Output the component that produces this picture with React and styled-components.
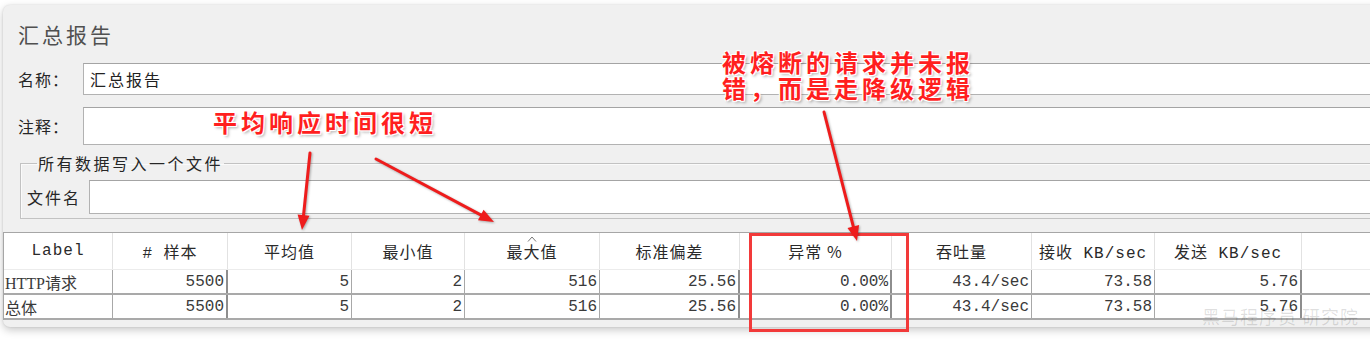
import React from "react";
import styled, { createGlobalStyle } from "styled-components";

const GlobalStyle = createGlobalStyle`
  html, body { margin: 0; padding: 0; background: #ffffff; }
  body { overflow: hidden; font-family: "Noto Sans CJK SC", "Liberation Sans", sans-serif; }
`;

const CJK = `"Noto Sans CJK SC", "Liberation Sans", sans-serif`;
const MONO = `"Liberation Mono", "Noto Sans CJK SC", monospace`;
const COLS = "109px 115px 124px 113px 135px 140px 152px 140px 123px 147px 1fr";

const Page = styled.div`
  position: relative;
  width: 1370px;
  height: 348px;
  overflow: hidden;
  padding: 5px 0 0 3px;
  box-sizing: border-box;
`;

const Panel = styled.div`
  background: #f0f0f0;
  border-radius: 7px 0 0 7px;
  box-shadow: 0 3px 8px rgba(0, 0, 0, 0.22), 0 0 2px rgba(0, 0, 0, 0.12);
  margin-right: -40px;
  padding: 19px 0 7px 0;
`;

const Title = styled.div`
  margin-left: 15px;
  font-family: ${CJK};
  font-size: 21px;
  line-height: 21px;
  letter-spacing: 3px;
  color: #505050;
`;

const FieldRow = styled.div`
  display: flex;
  align-items: center;
  padding-left: ${(p) => p.$pl ?? 15}px;
  margin-top: ${(p) => p.$mt ?? 0}px;
`;

const FieldLabel = styled.div`
  width: ${(p) => p.$w ?? 65}px;
  flex: none;
  font-family: ${CJK};
  font-size: 16px;
  letter-spacing: ${(p) => p.$ls ?? 1}px;
  color: #262626;
`;

const TextBox = styled.div`
  flex: 1;
  height: ${(p) => p.$h}px;
  box-sizing: border-box;
  background: #ffffff;
  border: 1px solid #b2b2b2;
  border-top-color: #a4a4a4;
  display: flex;
  align-items: center;
  padding-left: 6px;
  font-family: ${CJK};
  font-size: 16px;
  letter-spacing: 2px;
  color: #222;
`;

const Group = styled.fieldset`
  margin: 9px 0 0 17px;
  padding: 0 0 4px 6px;
  border: 1px solid #c2c2c2;
  box-shadow: inset 1px 1px 0 #fafafa;
  min-width: 0;
`;

const Legend = styled.legend`
  margin-left: 10px;
  padding: 0 1px;
  font-family: ${CJK};
  font-size: 16px;
  line-height: 18px;
  letter-spacing: 2.5px;
  color: #262626;
`;

const Table = styled.div`
  margin-top: 13px;
  border-top: 1px solid #a6a6a6;
  border-left: 1px solid #a6a6a6;
  background: #ffffff;
`;

const HeaderRow = styled.div`
  display: grid;
  grid-template-columns: ${COLS};
  height: 37px;
  border-bottom: 1px solid #ececec;
  box-sizing: border-box;
`;

const HeaderCell = styled.div`
  position: relative;
  display: flex;
  align-items: center;
  justify-content: center;
  border-right: 1px solid #e2e2e2;
  font-family: ${(p) => (p.$mono ? MONO : CJK)};
  font-size: 16px;
  letter-spacing: 1px;
  color: #2a2a2a;
  white-space: pre;
`;

const SortCaret = styled.svg`
  position: absolute;
  top: 3px;
  left: 50%;
  margin-left: -5px;
`;

const DataRow = styled.div`
  display: grid;
  grid-template-columns: ${COLS};
  height: 25px;
  border-bottom: 2px solid #a9a9a9;
  box-sizing: border-box;
`;

const DataCell = styled.div`
  display: flex;
  align-items: center;
  justify-content: ${(p) => (p.$left ? "flex-start" : "flex-end")};
  padding: ${(p) => (p.$left ? "0 0 0 1px" : "0 2px 0 0")};
  border-right: ${(p) => (p.$thick ? "2px solid #8e8e8e" : "1px solid #a8a8a8")};
  font-family: ${(p) => (p.$left ? `"Liberation Serif", "Noto Sans CJK SC", serif` : MONO)};
  font-size: 16px;
  color: #3a3a3a;
  white-space: pre;
  overflow: hidden;
`;

const Overlay = styled.svg`
  position: absolute;
  left: 0;
  top: 0;
  pointer-events: none;
`;

const Note = styled.div`
  position: absolute;
  left: ${(p) => p.$x}px;
  top: ${(p) => p.$y}px;
  font-family: ${CJK};
  font-size: 24px;
  line-height: 26px;
  font-weight: 700;
  letter-spacing: 4px;
  color: #ff1f1f;
  white-space: pre;
  text-shadow: -1px -1px 0 #fff, 1px -1px 0 #fff, -1px 1px 0 #fff, 1px 1px 0 #fff,
    0 0 3px #fff, 2px 2px 3px rgba(0, 0, 0, 0.35);
`;

const HighlightBox = styled.div`
  position: absolute;
  left: 749px;
  top: 233px;
  width: 160px;
  height: 99px;
  box-sizing: border-box;
  border: 3px solid #f23a3a;
`;

const Watermark = styled.div`
  position: absolute;
  left: 1202px;
  top: 303px;
  font-family: ${CJK};
  font-size: 18px;
  letter-spacing: 1px;
  color: rgba(0, 0, 0, 0.13);
  white-space: pre;
`;

const headers = [
  { t: "Label", mono: true },
  { t: "# 样本", mono: true },
  { t: "平均值" },
  { t: "最小值" },
  { t: "最大值", caret: true },
  { t: "标准偏差" },
  { t: "异常 %" },
  { t: "吞吐量" },
  { t: "接收 KB/sec", mono: true },
  { t: "发送 KB/sec", mono: true },
  { t: "" },
];

const thickCols = [1, 5, 6, 9];

const rows = [
  ["HTTP请求", "5500", "5", "2", "516", "25.56", "0.00%", "43.4/sec", "73.58", "5.76", ""],
  ["总体", "5500", "5", "2", "516", "25.56", "0.00%", "43.4/sec", "73.58", "5.76", ""],
];

function Arrow({ x1, y1, x2, y2 }) {
  const dx = x2 - x1;
  const dy = y2 - y1;
  const len = Math.hypot(dx, dy);
  const ux = dx / len;
  const uy = dy / len;
  const hl = 15;
  const hw = 6;
  const bx = x2 - ux * hl;
  const by = y2 - uy * hl;
  const pts = `${x2},${y2} ${bx - uy * hw},${by + ux * hw} ${bx + uy * hw},${by - ux * hw}`;
  return (
    <g>
      <line x1={x1} y1={y1} x2={bx + ux * 2} y2={by + uy * 2} stroke="#ee1c1c" strokeWidth="3" strokeLinecap="round" />
      <polygon points={pts} fill="#ee1c1c" />
    </g>
  );
}

export default function App() {
  return (
    <>
      <GlobalStyle />
      <Page>
        <Panel>
          <Title>汇总报告</Title>
          <FieldRow $mt={18}>
            <FieldLabel>名称：</FieldLabel>
            <TextBox $h={32}>汇总报告</TextBox>
          </FieldRow>
          <FieldRow $mt={12}>
            <FieldLabel>注释：</FieldLabel>
            <TextBox $h={38} />
          </FieldRow>
          <Group>
            <Legend>所有数据写入一个文件</Legend>
            <FieldRow $pl={0} $mt={8}>
              <FieldLabel $w={62} $ls={2}>文件名</FieldLabel>
              <TextBox $h={34} />
            </FieldRow>
          </Group>
          <Table>
            <HeaderRow>
              {headers.map((h, i) => (
                <HeaderCell key={i} $mono={h.mono}>
                  {h.caret && (
                    <SortCaret width="10" height="6" viewBox="0 0 10 6">
                      <path d="M1 5.5 L5 1 L9 5.5" fill="none" stroke="#777" strokeWidth="1" />
                    </SortCaret>
                  )}
                  {h.t}
                </HeaderCell>
              ))}
            </HeaderRow>
            {rows.map((r, ri) => (
              <DataRow key={ri}>
                {r.map((c, ci) => (
                  <DataCell key={ci} $left={ci === 0} $thick={thickCols.includes(ci)}>
                    {c}
                  </DataCell>
                ))}
              </DataRow>
            ))}
          </Table>
        </Panel>

        <HighlightBox />
        <Watermark>黑马程序员 研究院</Watermark>
        <Overlay width="1370" height="348" viewBox="0 0 1370 348">
          <g style={{ filter: "drop-shadow(1px 1px 1px rgba(0,0,0,0.3))" }}>
            <Arrow x1={310} y1={153} x2={302} y2={230} />
            <Arrow x1={376} y1={159} x2={494} y2={222} />
            <Arrow x1={824} y1={112} x2={857} y2={241} />
          </g>
        </Overlay>
        <Note $x={213} $y={109}>平均响应时间很短</Note>
        <Note $x={722} $y={49}>{"被熔断的请求并未报\n错，而是走降级逻辑"}</Note>
      </Page>
    </>
  );
}
